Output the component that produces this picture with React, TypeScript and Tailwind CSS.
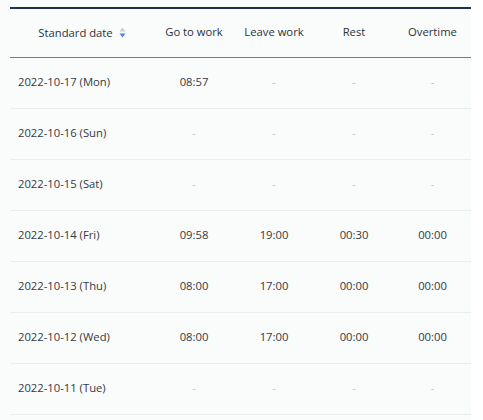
const rows = [
  { date: "2022-10-17 (Mon)", go: "08:57", leave: "-", rest: "-", over: "-" },
  { date: "2022-10-16 (Sun)", go: "-", leave: "-", rest: "-", over: "-" },
  { date: "2022-10-15 (Sat)", go: "-", leave: "-", rest: "-", over: "-" },
  { date: "2022-10-14 (Fri)", go: "09:58", leave: "19:00", rest: "00:30", over: "00:00" },
  { date: "2022-10-13 (Thu)", go: "08:00", leave: "17:00", rest: "00:00", over: "00:00" },
  { date: "2022-10-12 (Wed)", go: "08:00", leave: "17:00", rest: "00:00", over: "00:00" },
  { date: "2022-10-11 (Tue)", go: "-", leave: "-", rest: "-", over: "-" },
];

const Cell = ({ v }: { v: string }) => (
  <td className={`text-center ${v === "-" ? "text-[#c3c7cc]" : "text-[#333a44]"}`}>{v}</td>
);

const SortIcon = () => (
  <svg width="7" height="11" viewBox="0 0 7 11" className="inline-block ml-[6px] -mt-[2px]">
    <path d="M3.5 0.5 L6.5 4.5 H0.5 Z" fill="#c9ced6" />
    <path d="M3.5 10.5 L6.5 6.5 H0.5 Z" fill="#4a86e8" />
  </svg>
);

export default function App() {
  return (
    <div className="flex h-[420px] w-[483px] bg-white" style={{ fontFamily: '"Open Sans", sans-serif' }}>
      <div className="w-[471px] bg-[#fafbfb] pt-[7px] pl-[10px]">
        <table className="w-[461px] table-fixed border-collapse text-[11.25px]">
          <colgroup>
            <col className="w-[144px]" />
            <col className="w-[80px]" />
            <col className="w-[80px]" />
            <col className="w-[80px]" />
            <col className="w-[77px]" />
          </colgroup>
          <thead>
            <tr className="h-[49px] border-t-2 border-b border-t-[#1f2f4f] border-b-[#6e7b90] text-[#2b323c]">
              <th className="font-normal text-center pt-[1px]">
                Standard date
                <SortIcon />
              </th>
              <th className="font-normal text-center">Go to work</th>
              <th className="font-normal text-center">Leave work</th>
              <th className="font-normal text-center">Rest</th>
              <th className="font-normal text-center">Overtime</th>
            </tr>
          </thead>
          <tbody>
            {rows.map((r) => (
              <tr key={r.date} className="h-[51px] border-b border-[#ebeef0]">
                <td className="pl-[8px] text-[#333a44]">{r.date}</td>
                <Cell v={r.go} />
                <Cell v={r.leave} />
                <Cell v={r.rest} />
                <Cell v={r.over} />
              </tr>
            ))}
          </tbody>
        </table>
      </div>
    </div>
  );
}
